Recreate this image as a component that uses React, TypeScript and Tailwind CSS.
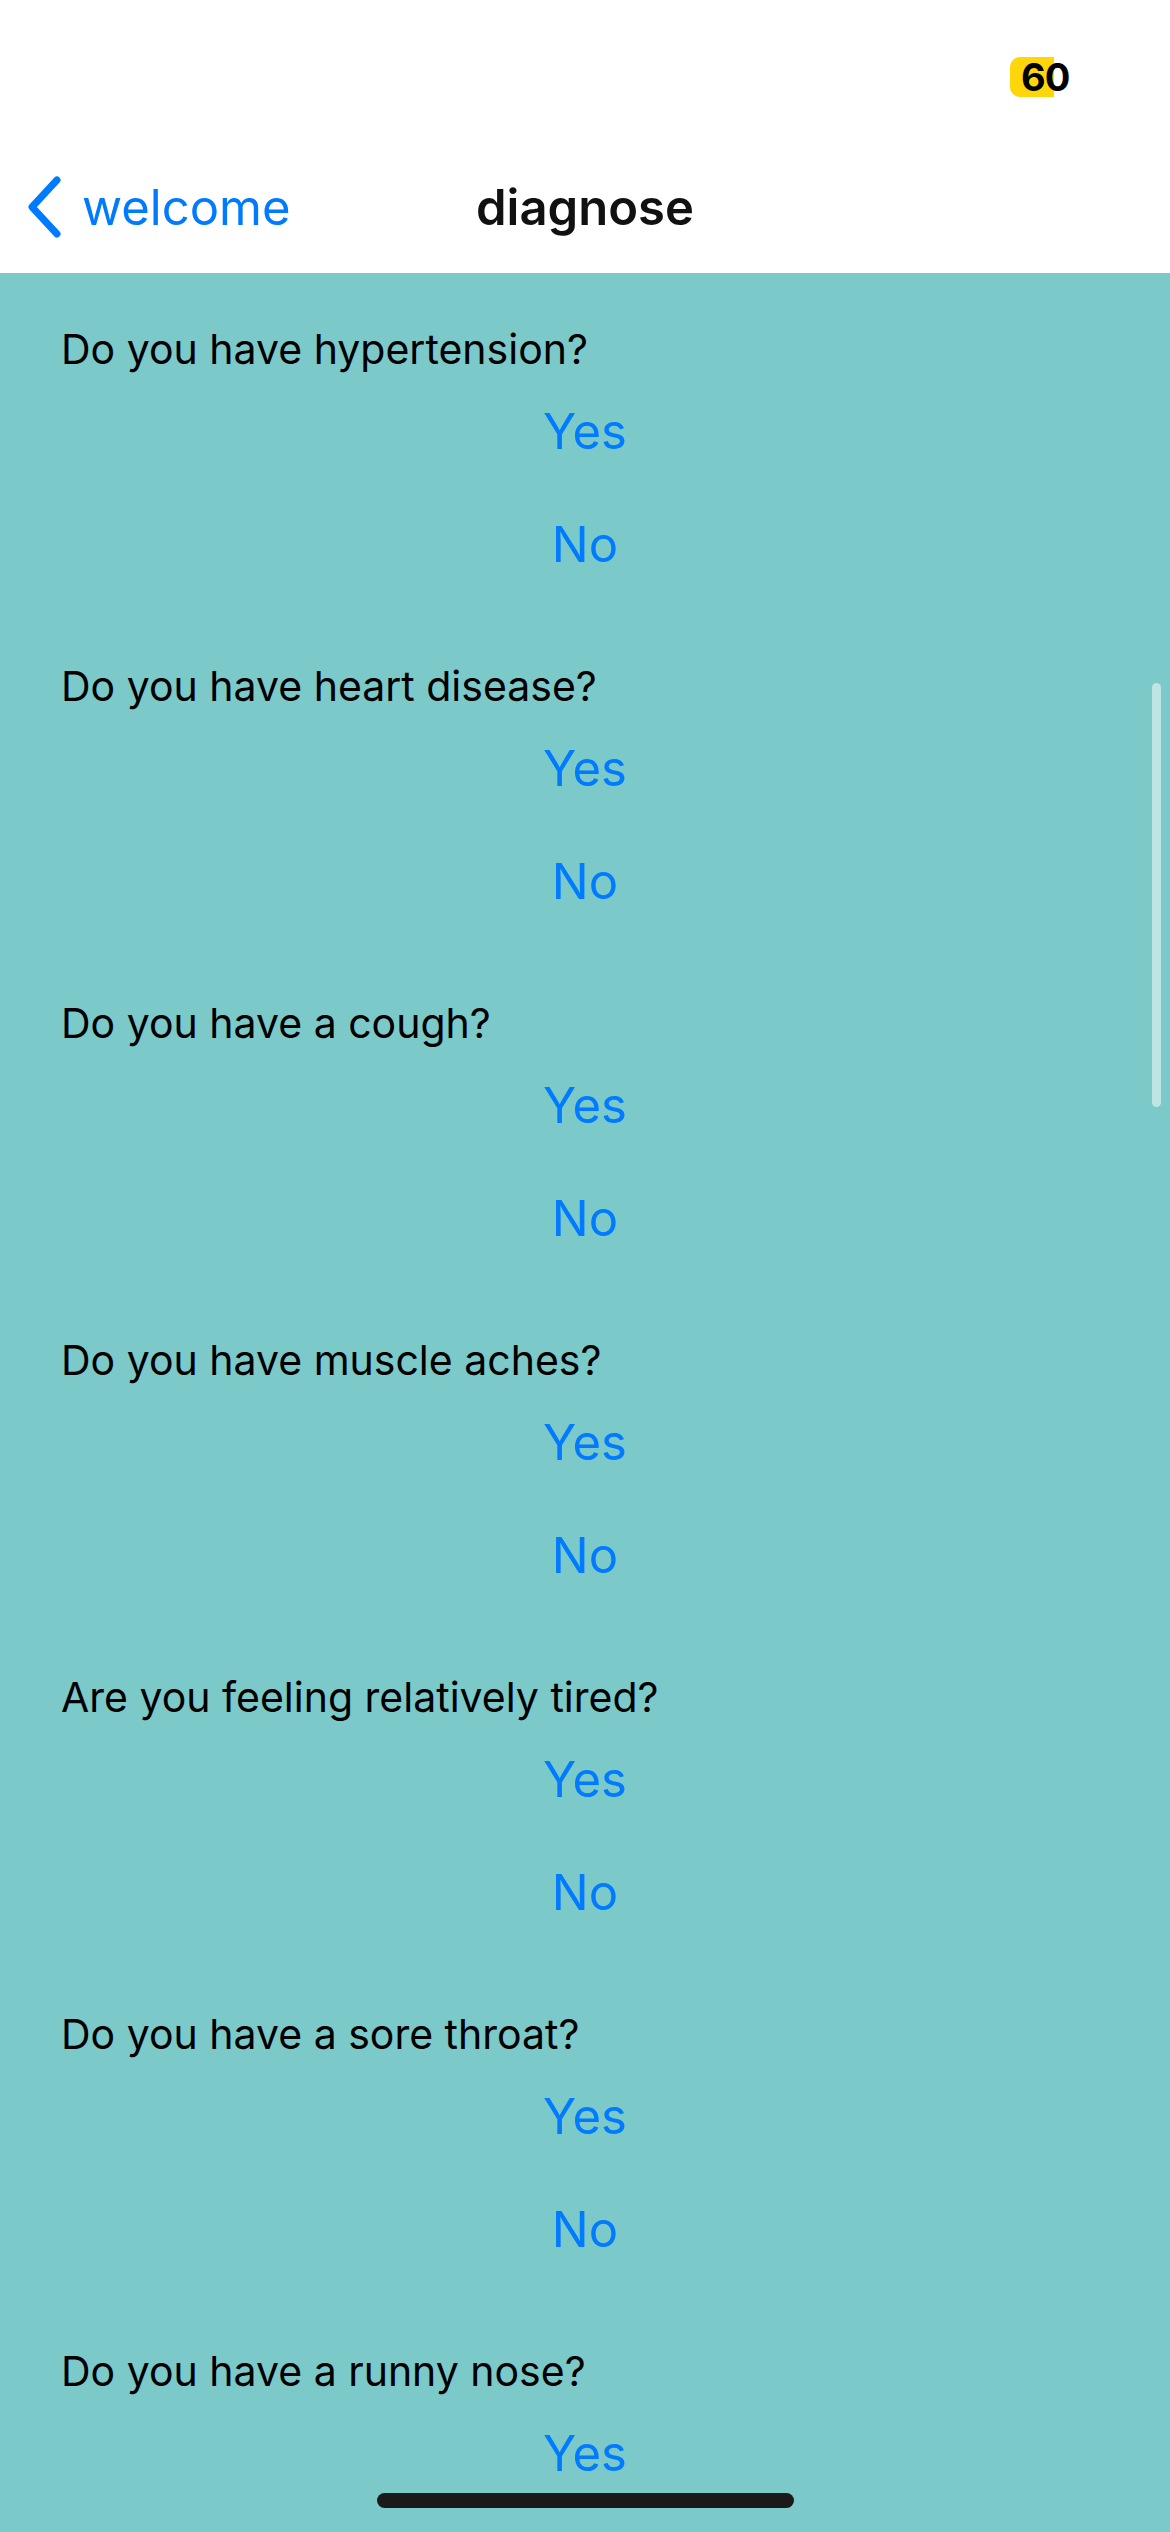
const questions = [
  "Do you have hypertension?",
  "Do you have heart disease?",
  "Do you have a cough?",
  "Do you have muscle aches?",
  "Are you feeling relatively tired?",
  "Do you have a sore throat?",
  "Do you have a runny nose?",
];

function QuestionBlock({ text }: { text: string }) {
  return (
    <div className="flex flex-col h-[337px] shrink-0">
      <div className="h-[50px] leading-[50px] text-[41px] text-black pl-[61px]">
        {text}
      </div>
      <button className="mt-[33px] h-[50px] leading-[50px] text-[49px] text-[#007aff] text-center">
        Yes
      </button>
      <button className="mt-[63px] h-[50px] leading-[50px] text-[49px] text-[#007aff] text-center">
        No
      </button>
    </div>
  );
}

export default function App() {
  return (
    <div
      className="relative w-[1170px] h-[2532px] overflow-hidden bg-[#7bc9c9] flex flex-col"
      style={{ fontFamily: "Inter, 'Liberation Sans', sans-serif" }}
    >
      {/* status bar + nav */}
      <div className="bg-white shrink-0 border-b border-black/30">
        <div className="h-[141px] pt-[57px] pl-[1010px]">
          <div className="relative w-[60px] h-[40px]">
            <div className="absolute left-0 top-0 w-[44px] h-[40px] bg-[#ffd60a] rounded-l-[10px]" />
            <span className="absolute left-[11px] top-0 leading-[40px] text-[38px] font-bold text-black tracking-[-1px]">
              60
            </span>
          </div>
        </div>
        <div className="h-[132px] flex items-center">
          <div className="flex-1 basis-0 flex items-center">
            <svg width="40" height="64" viewBox="0 0 40 64" className="ml-[24px]" fill="none">
              <path
                d="M33 5 L8 32 L33 59"
                stroke="#007aff"
                strokeWidth="7"
                strokeLinecap="round"
                strokeLinejoin="round"
              />
            </svg>
            <span className="ml-[18px] text-[49px] text-[#007aff] leading-none">welcome</span>
          </div>
          <div className="text-[49px] font-semibold text-[#111] leading-none">diagnose</div>
          <div className="flex-1 basis-0" />
        </div>
      </div>

      {/* questions */}
      <div className="pt-[50px] flex flex-col">
        {questions.map((q, i) => (
          <QuestionBlock key={i} text={q} />
        ))}
      </div>

      {/* scroll indicator */}
      <div className="absolute left-[1152px] top-[683px] w-[9px] h-[424px] rounded-full bg-[#bfe4e4]" />

      {/* home indicator */}
      <div className="absolute left-[377px] top-[2493px] w-[417px] h-[15px] rounded-full bg-[#1a1a1a]" />
    </div>
  );
}
